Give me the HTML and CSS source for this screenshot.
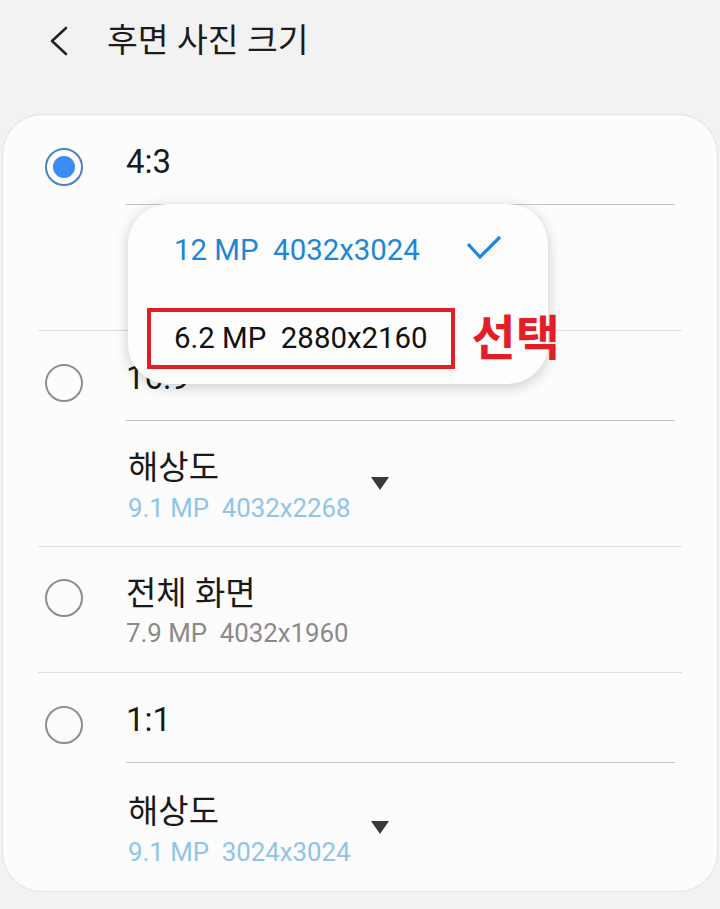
FILE: index.html
```html
<!DOCTYPE html>
<html lang="ko">
<head>
<meta charset="utf-8">
<title>후면 사진 크기</title>
<link rel="stylesheet" href="styles.css">
</head>
<body>
<header class="appbar">
  <svg class="back" width="20" height="30" viewBox="0 0 20 30"><path d="M17 2 L3 15 L17 28" fill="none" stroke="#222" stroke-width="2.6" stroke-linecap="round" stroke-linejoin="round"/></svg>
  <h1 class="title">후면 사진 크기</h1>
</header>

<main class="card">
  <section class="group">
    <div class="opt">
      <span class="radio on"><span class="dot"></span></span>
      <div class="opt-label">4:3</div>
    </div>
    <div class="sub">
      <div class="sub-text">
        <div class="sub-title">해상도</div>
        <div class="sub-value blue">12 MP&nbsp;&nbsp;4032x3024</div>
      </div>
      <span class="tri"></span>
    </div>
  </section>
  <div class="divider"></div>

  <section class="group">
    <div class="opt">
      <span class="radio"></span>
      <div class="opt-label">16:9</div>
    </div>
    <div class="sub">
      <div class="sub-text">
        <div class="sub-title">해상도</div>
        <div class="sub-value blue">9.1 MP&nbsp;&nbsp;4032x2268</div>
      </div>
      <span class="tri"></span>
    </div>
  </section>
  <div class="divider"></div>

  <section class="group">
    <div class="opt tall">
      <span class="radio"></span>
      <div class="opt-text">
        <div class="sub-title">전체 화면</div>
        <div class="sub-value gray">7.9 MP&nbsp;&nbsp;4032x1960</div>
      </div>
    </div>
  </section>
  <div class="divider"></div>

  <section class="group">
    <div class="opt">
      <span class="radio"></span>
      <div class="opt-label">1:1</div>
    </div>
    <div class="sub last">
      <div class="sub-text">
        <div class="sub-title">해상도</div>
        <div class="sub-value blue">9.1 MP&nbsp;&nbsp;3024x3024</div>
      </div>
      <span class="tri"></span>
    </div>
  </section>

  <div class="popup">
    <div class="pop-item selected">
      <span>12 MP&nbsp;&nbsp;4032x3024</span>
      <svg class="check" width="36" height="26" viewBox="0 0 36 26"><path d="M2 9 L14 22 L34 2" fill="none" stroke="#1f86d6" stroke-width="3.2"/></svg>
    </div>
    <div class="pop-item mark">
      <span class="redbox">6.2 MP&nbsp;&nbsp;2880x2160</span>
      <span class="note">선택</span>
    </div>
  </div>
</main>
</body>
</html>
```

FILE: styles.css
```css
* { box-sizing: border-box; }

html, body {
  margin: 0;
  padding: 0;
  background: #f2f2f2;
}

body {
  width: 720px;
  height: 909px;
  overflow: hidden;
  font-family: Roboto, "Noto Sans CJK KR", sans-serif;
  color: #1a1a1a;
}

.appbar {
  height: 82px;
  display: flex;
  align-items: center;
  padding-left: 49px;
}

.back { display: block; }

.title {
  margin: 0 0 0 38px;
  font-size: 33.5px;
  font-weight: 400;
  line-height: 40px;
  color: #1c1c1c;
}

.card {
  position: relative;
  margin: 32px 2px 0;
  height: 778px;
  background: #fcfcfc;
  border: 1px solid #e3e3e3;
  border-radius: 40px;
}

.opt {
  display: flex;
  height: 90px;
}

.opt .radio { margin: 33px 43px 0 42px; }

.opt-label {
  flex: 1;
  margin-right: 42px;
  padding-top: 27px;
  font-size: 33px;
  line-height: 40px;
  border-bottom: 1.5px solid #c6c6c6;
}

.opt.tall { height: 125px; }
.opt.tall .radio { margin-top: 32px; }

.opt-text { padding-top: 27px; }
.opt-text .sub-value { margin-top: 2px; }

.radio {
  flex: none;
  width: 38px;
  height: 38px;
  border: 2px solid #8e8e8e;
  border-radius: 50%;
  display: flex;
  align-items: center;
  justify-content: center;
}

.radio.on { border-color: #4a80c6; }

.dot {
  width: 22px;
  height: 22px;
  border-radius: 50%;
  background: #3b8bf4;
}

.sub {
  display: flex;
  align-items: flex-start;
  height: 125px;
  padding: 27px 0 0 125px;
}

.sub.last { height: 126px; padding-top: 29px; }

.sub-title {
  font-size: 33px;
  line-height: 40px;
  color: #1a1a1a;
}

.sub-value {
  margin-top: 3px;
  font-size: 25.8px;
  line-height: 34px;
  white-space: nowrap;
}

.blue { color: #8fc4e9; }
.gray { color: #8a8a8a; }

.tri {
  flex: none;
  margin: 29px 0 0 20px;
  width: 0;
  height: 0;
  border-left: 9px solid transparent;
  border-right: 9px solid transparent;
  border-top: 13px solid #3a3a3a;
}

.divider {
  height: 1px;
  margin: 0 35px;
  background: #dedede;
}

.popup {
  position: absolute;
  left: 125px;
  top: 89px;
  width: 420px;
  height: 180px;
  background: #fdfdfd;
  border-radius: 40px;
  box-shadow: 0 3px 14px rgba(0, 0, 0, 0.2);
  padding-top: 26px;
}

.pop-item {
  display: flex;
  align-items: center;
  font-size: 29.4px;
  line-height: 40px;
  white-space: nowrap;
}

.pop-item.selected {
  justify-content: space-between;
  padding: 0 46px 0 46px;
  color: #1f86d6;
}

.check { display: block; margin-top: -4px; }

.pop-item.mark {
  margin-top: 38px;
  padding-left: 19px;
  color: #111;
}

.redbox {
  flex: none;
  height: 61px;
  line-height: 53px;
  padding: 0 23px;
  border: 4px solid #e31e26;
}

.note {
  flex: none;
  margin-left: 17px;
  font-size: 48px;
  font-weight: 700;
  line-height: 50px;
  color: #e31e26;
}
```
